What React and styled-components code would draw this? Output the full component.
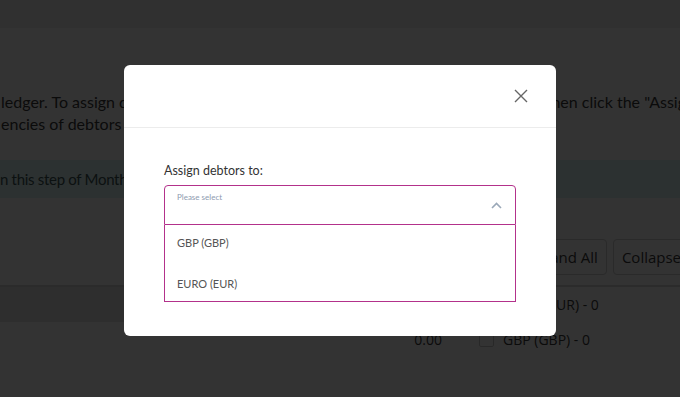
import React from 'react';
import styled, { createGlobalStyle } from 'styled-components';

const GlobalStyle = createGlobalStyle`
  html, body {
    margin: 0;
    padding: 0;
    overflow: hidden;
    background: #ffffff;
  }
`;

const Page = styled.div`
  width: 680px;
  height: 397px;
  font-family: 'Lato', 'Liberation Sans', sans-serif;
  color: #3a3a3a;
`;

const TopBar = styled.div`
  height: 28px;
  background: #f0f0f0;
`;

const Main = styled.div`
  padding-top: 63px;
`;

const Intro = styled.p`
  margin: 0 0 0 1px;
  font-size: 16px;
  line-height: 22px;
  white-space: nowrap;
`;

const InfoBar = styled.div`
  margin-top: 25px;
  height: 38px;
  display: flex;
  align-items: center;
  background: #dcf5f5;
  color: #3f5555;
  font-size: 15px;
  letter-spacing: -0.3px;
  white-space: nowrap;
`;

const Toolbar = styled.div`
  margin-top: 41px;
  margin-left: -80px;
  width: 791px;
  display: flex;
  justify-content: space-between;
`;

const ButtonGroup = styled.div`
  display: flex;
  gap: 6px;
`;

const Button = styled.button`
  height: 36px;
  padding: 0 8px;
  border: 1px solid #cfcfcf;
  border-radius: 4px;
  background: #fff;
  color: #3a3a3a;
  font-family: 'Open Sans', 'Liberation Sans', sans-serif;
  font-size: 15px;
  white-space: nowrap;
`;

const Table = styled.div`
  margin-top: 10px;
  border-top: 2px solid #d8d8d8;
  font-family: 'Open Sans', 'Liberation Sans', sans-serif;
  font-size: 14px;
  color: #3a3a3a;
`;

const Row = styled.div`
  display: grid;
  grid-template-columns: 360px 82px 1fr;
  height: ${(p) => p.$h}px;
`;

const Cell = styled.div`
  display: flex;
  align-items: center;
  justify-content: ${(p) => (p.$right ? 'flex-end' : 'flex-start')};
  background: ${(p) => (p.$shaded ? '#e4e4e4' : 'transparent')};
  padding-left: ${(p) => (p.$right ? 0 : 37)}px;
  white-space: nowrap;
`;

const Check = styled.span`
  width: 15px;
  height: 15px;
  border: 1px solid #c8c8c8;
  border-radius: 2px;
  box-sizing: border-box;
  margin-right: 9px;
`;

const Overlay = styled.div`
  position: fixed;
  inset: 0;
  background: rgba(0, 0, 0, 0.8);
  display: flex;
  justify-content: center;
  align-items: flex-start;
  padding-top: 65px;
  box-sizing: border-box;
`;

const Modal = styled.div`
  width: 432px;
  background: #fff;
  border-radius: 6px;
  font-family: 'Lato', 'Liberation Sans', sans-serif;
`;

const ModalHeader = styled.div`
  height: 62px;
  border-bottom: 1px solid #ececec;
  display: flex;
  justify-content: flex-end;
  align-items: center;
  padding-right: 28px;
`;

const CloseButton = styled.button`
  border: none;
  background: none;
  padding: 0;
  width: 14px;
  height: 14px;
  display: flex;
  cursor: pointer;
`;

const ModalBody = styled.div`
  padding: 35px 40px 34px;
`;

const Label = styled.div`
  font-size: 12.5px;
  line-height: 16px;
  color: #333;
  margin-bottom: 6px;
`;

const Select = styled.div`
  height: 40px;
  box-sizing: border-box;
  border: 1px solid #b3318b;
  border-radius: 4px 4px 0 0;
  display: flex;
  justify-content: space-between;
  padding: 5px 13px 0 12px;
`;

const Placeholder = styled.span`
  font-size: 8px;
  line-height: 12px;
  color: #8e9bb0;
`;

const Chevron = styled.svg`
  align-self: center;
  margin-top: -5px;
`;

const Options = styled.div`
  border: 1px solid #b3318b;
  border-top: none;
  padding: 11px 0 10px 12px;
  display: flex;
  flex-direction: column;
  gap: 27px;
`;

const Option = styled.div`
  line-height: 14px;
  font-size: 11px;
  color: #555;
`;

export default function App() {
  return (
    <>
      <GlobalStyle />
      <Page>
        <TopBar />
        <Main>
          <Intro>
            ledger. To assign debtors to a different currency, tick the relevant debtors and then click the "Assign" button.
            <br />
            encies of debtors are shown below.
          </Intro>
          <InfoBar>n this step of Month End you can review the currency of each debtor.</InfoBar>
          <Toolbar>
            <Button>Select All</Button>
            <ButtonGroup>
              <Button>Expand All</Button>
              <Button>Collapse All</Button>
            </ButtonGroup>
          </Toolbar>
          <Table>
            <Row $h={35}>
              <Cell $shaded />
              <Cell $right $shaded>0.00</Cell>
              <Cell>
                <Check />
                EURO (EUR) - 0
              </Cell>
            </Row>
            <Row $h={35}>
              <Cell />
              <Cell $right>0.00</Cell>
              <Cell>
                <Check />
                GBP (GBP) - 0
              </Cell>
            </Row>
          </Table>
        </Main>
      </Page>
      <Overlay>
        <Modal>
          <ModalHeader>
            <CloseButton aria-label="Close">
              <svg width="14" height="14" viewBox="0 0 14 14">
                <path d="M1 1 L13 13 M13 1 L1 13" stroke="#666" strokeWidth="1.4" fill="none" />
              </svg>
            </CloseButton>
          </ModalHeader>
          <ModalBody>
            <Label>Assign debtors to:</Label>
            <Select>
              <Placeholder>Please select</Placeholder>
              <Chevron width="11" height="7" viewBox="0 0 11 7">
                <path d="M1 6 L5.5 1.5 L10 6" stroke="#9aa8b8" strokeWidth="1.6" fill="none" />
              </Chevron>
            </Select>
            <Options>
              <Option>GBP (GBP)</Option>
              <Option>EURO (EUR)</Option>
            </Options>
          </ModalBody>
        </Modal>
      </Overlay>
    </>
  );
}
